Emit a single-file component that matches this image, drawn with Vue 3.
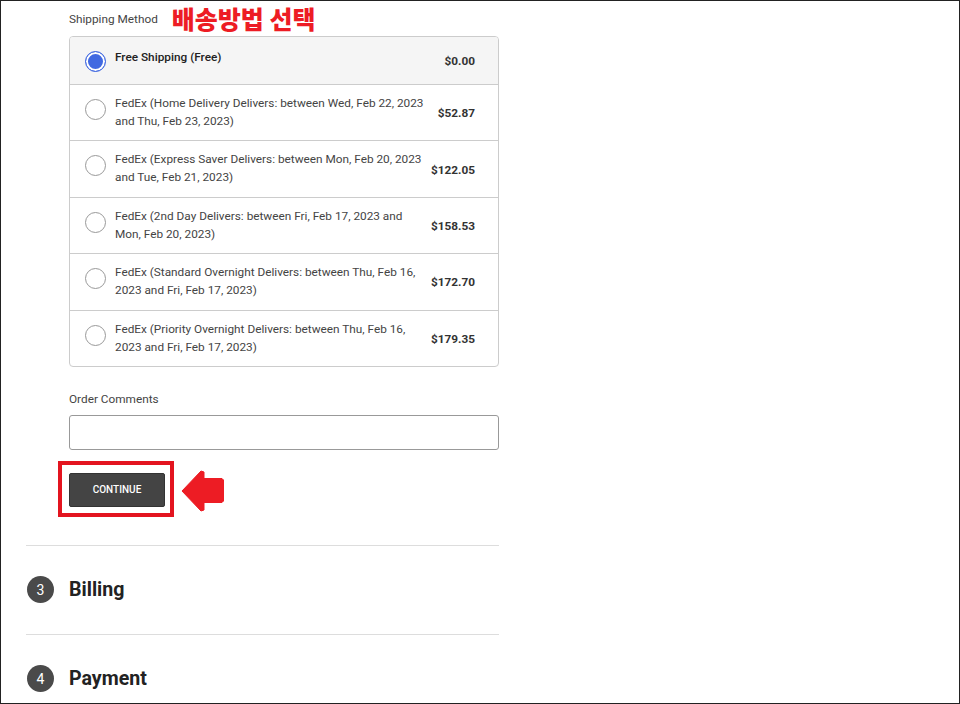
<script setup>
const rows = [
  { text: 'Free Shipping (Free)', price: '$0.00', selected: true },
  { text: 'FedEx (Home Delivery Delivers: between Wed, Feb 22, 2023 and Thu, Feb 23, 2023)', price: '$52.87' },
  { text: 'FedEx (Express Saver Delivers: between Mon, Feb 20, 2023 and Tue, Feb 21, 2023)', price: '$122.05' },
  { text: 'FedEx (2nd Day Delivers: between Fri, Feb 17, 2023 and Mon, Feb 20, 2023)', price: '$158.53' },
  { text: 'FedEx (Standard Overnight Delivers: between Thu, Feb 16, 2023 and Fri, Feb 17, 2023)', price: '$172.70' },
  { text: 'FedEx (Priority Overnight Delivers: between Thu, Feb 16, 2023 and Fri, Feb 17, 2023)', price: '$179.35' }
]
</script>

<template>
  <div class="frame">
    <main class="column">
      <section class="shipping">
        <div class="heading">
          <span class="label">Shipping Method</span>
          <span class="note">배송방법 선택</span>
        </div>
        <ul class="options">
          <li v-for="row in rows" :key="row.price" class="option" :class="{ selected: row.selected }">
            <span class="radio"></span>
            <span class="desc">{{ row.text }}</span>
            <span class="price">{{ row.price }}</span>
          </li>
        </ul>
        <label class="label comments">Order Comments</label>
        <div class="input"></div>
        <div class="action">
          <div class="highlight">
            <button class="continue">CONTINUE</button>
          </div>
          <svg class="arrow" width="44" height="44" viewBox="0 0 44 44">
            <path d="M21 2 L2 22 L21 42 L24 41 L24 33.5 L42 33.5 L43.5 32 L43.5 11 L42 9.5 L24 9.5 L24 3 Z" fill="#ed1c24" stroke="#ed1c24" stroke-linejoin="round" />
          </svg>
        </div>
      </section>
      <section class="step first">
        <span class="num">3</span>
        <h2>Billing</h2>
      </section>
      <section class="step">
        <span class="num">4</span>
        <h2>Payment</h2>
      </section>
    </main>
  </div>
</template>

<style>
html, body { margin: 0; background: #fff; }
</style>

<style scoped>
.frame {
  box-sizing: border-box;
  width: 960px;
  height: 704px;
  overflow: hidden;
  border: 1px solid #222;
  background: #fff;
  font-family: Roboto, sans-serif;
  color: #333;
}
.column {
  width: 473px;
  margin-left: 25px;
}
.shipping {
  padding-left: 43px;
}
.heading {
  display: flex;
  align-items: center;
  height: 35px;
}
.label {
  font-size: 11.8px;
  line-height: 18px;
  color: #444;
}
.heading .label {
  margin-top: 1px;
}
.note {
  margin-left: 14px;
  font-family: "Noto Sans CJK KR", sans-serif;
  font-size: 25px;
  font-weight: 900;
  line-height: 30px;
  color: #ed1c24;
  margin-top: -1px;
}
.options {
  list-style: none;
  margin: 0;
  padding: 0;
  border: 1px solid #ccc;
  border-radius: 4px;
  overflow: hidden;
}
.option {
  box-sizing: border-box;
  display: flex;
  align-items: flex-start;
  height: 56.4px;
  padding: 9px 23px 0 15px;
  border-top: 1px solid #ccc;
  font-size: 11.8px;
  line-height: 18px;
}
.option:first-child {
  height: 47px;
  padding-top: 11px;
  border-top: 0;
}
.selected {
  background: #f5f5f5;
  font-weight: 500;
  color: #222;
}
.radio {
  box-sizing: border-box;
  flex: none;
  width: 21px;
  height: 21px;
  margin-top: 5px;
  border: 1px solid #999;
  border-radius: 50%;
  background: #fff;
}
.selected .radio {
  margin-top: 3px;
  border-color: #4169e1;
  background: #4169e1;
  box-shadow: inset 0 0 0 2px #fff;
}
.desc {
  flex: 1;
  margin-left: 9px;
  color: #444;
}
.selected .desc {
  color: #222;
}
.price {
  flex: none;
  align-self: center;
  margin-left: 8px;
  margin-top: -8px;
  font-weight: 700;
  color: #333;
}
.selected .price {
  margin-top: -11px;
}
.comments {
  display: block;
  margin-top: 23px;
}
.input {
  box-sizing: border-box;
  height: 35px;
  margin-top: 7px;
  border: 1px solid #999;
  border-radius: 3px;
}
.action {
  display: flex;
  align-items: center;
  margin-top: 11px;
  margin-left: -11px;
}
.highlight {
  box-sizing: border-box;
  width: 116px;
  height: 56px;
  padding: 8px 7px;
  border: 4px solid #e3141f;
}
.continue {
  display: block;
  width: 96px;
  height: 34px;
  padding: 0;
  border: 1px solid #333;
  border-radius: 2px;
  background: #444;
  color: #fff;
  font-family: Roboto, sans-serif;
  font-size: 10px;
  font-weight: 500;
}
.arrow {
  margin-left: 6px;
  margin-top: 4px;
}
.step {
  display: flex;
  align-items: center;
  height: 88px;
  border-top: 1px solid #ddd;
}
.step.first {
  margin-top: 28px;
}
.num {
  display: flex;
  align-items: center;
  justify-content: center;
  width: 27px;
  height: 27px;
  margin-left: 1px;
  border-radius: 50%;
  background: #4a4a4a;
  color: #fff;
  font-size: 14px;
}
h2 {
  margin: 0 0 0 15px;
  font-size: 19.6px;
  font-weight: 700;
  color: #222;
}
</style>
